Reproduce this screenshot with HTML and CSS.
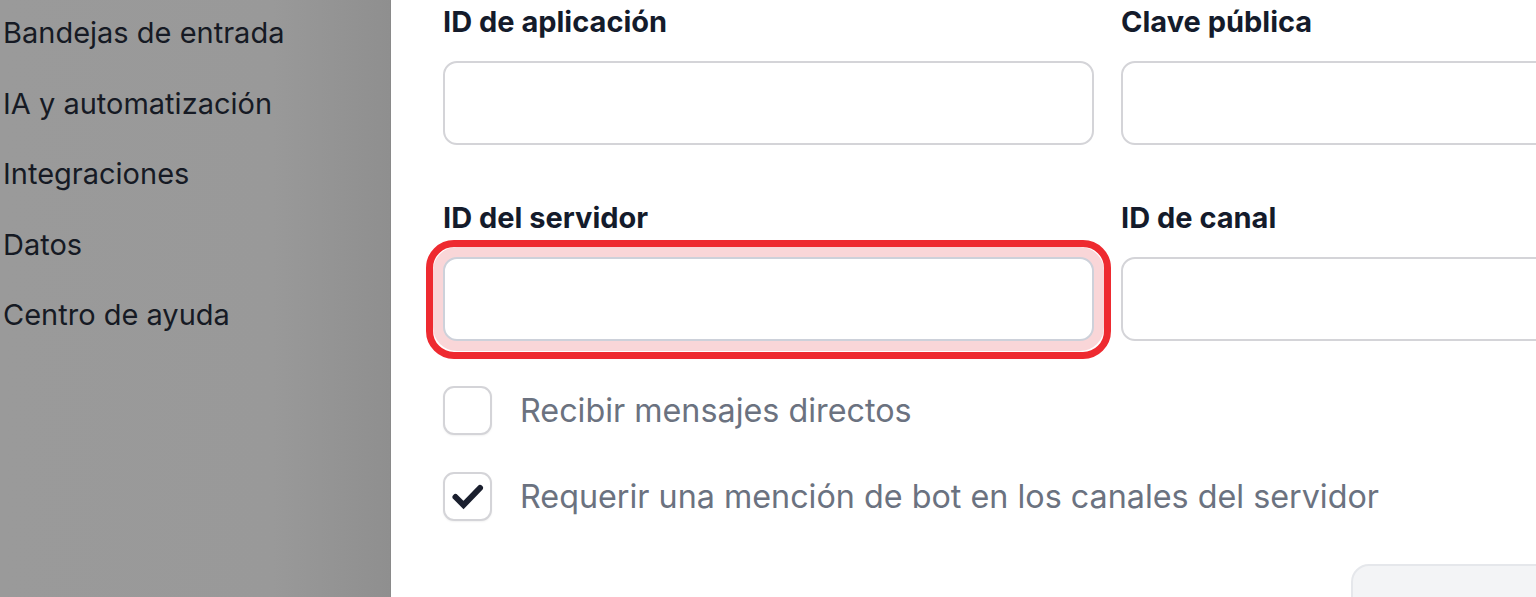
FILE: index.html
```html
<!DOCTYPE html>
<html lang="es">
<head>
<meta charset="utf-8">
<title>Discord</title>
<link rel="stylesheet" href="styles.css">
</head>
<body>
<div class="app">
  <aside class="sidebar">
    <ul class="nav">
      <li>Bandejas de entrada</li>
      <li>IA y automatización</li>
      <li>Integraciones</li>
      <li>Datos</li>
      <li>Centro de ayuda</li>
    </ul>
  </aside>
  <main class="main">
    <div class="grid">
      <div class="field">
        <label class="label">ID de aplicación</label>
        <div class="input"></div>
      </div>
      <div class="field">
        <label class="label">Clave pública</label>
        <div class="input"></div>
      </div>
      <div class="field">
        <label class="label">ID del servidor</label>
        <div class="input-wrap">
          <div class="input input-focus"></div>
          <div class="highlight"></div>
        </div>
      </div>
      <div class="field">
        <label class="label">ID de canal</label>
        <div class="input"></div>
      </div>
    </div>
    <div class="checks">
      <div class="check-row">
        <span class="box"></span>
        <span class="check-text">Recibir mensajes directos</span>
      </div>
      <div class="check-row">
        <span class="box">
          <svg width="36" height="36" viewBox="0 0 36 36"><path d="M5.5 19 L13.5 27 L30 10" fill="none" stroke="#1a1f2e" stroke-width="6" stroke-linecap="round" stroke-linejoin="miter"/></svg>
        </span>
        <span class="check-text">Requerir una mención de bot en los canales del servidor</span>
      </div>
    </div>
    <div class="actions">
      <div class="btn"></div>
    </div>
  </main>
</div>
</body>
</html>
```
FILE: styles.css
```css
html, body {
  margin: 0;
  padding: 0;
  height: 100%;
  overflow: hidden;
  background: #ffffff;
  font-family: Inter, "Noto Sans", "Liberation Sans", sans-serif;
}

.app {
  display: flex;
  height: 597px;
  width: 1536px;
  overflow: hidden;
}

.sidebar {
  width: 391px;
  flex: 0 0 391px;
  background: linear-gradient(to right, #9a9a9a 0%, #999999 70%, #8f8f8f 100%);
  border-right: 1px solid #8a8a8a;
  box-sizing: border-box;
}

.nav {
  list-style: none;
  margin: -2px 0 0 0;
  padding: 0 0 0 3px;
}

.nav li {
  height: 70.5px;
  line-height: 70.5px;
  font-size: 29px;
  color: #161a24;
}

.main {
  flex: 1;
  padding: 0 0 0 52px;
  min-width: 0;
}

.grid {
  display: grid;
  grid-template-columns: 651px 651px;
  column-gap: 27px;
  row-gap: 55px;
  padding-top: 4px;
}

.field {
  display: flex;
  flex-direction: column;
}

.label {
  font-size: 29px;
  font-weight: 700;
  color: #141b2b;
  line-height: 36px;
  height: 36px;
  margin-bottom: 21px;
}

.input {
  height: 84px;
  box-sizing: border-box;
  border: 2px solid #d4d4d8;
  border-radius: 14px;
  background: #ffffff;
}

.input-wrap {
  position: relative;
}

.input-focus {
  border-color: #cdd1da;
  box-shadow: 0 0 0 10px #f9d6d8;
}

.highlight {
  position: absolute;
  left: -17px;
  right: -17px;
  top: -17px;
  bottom: -18px;
  border: 7px solid #ee2a30;
  border-radius: 28px;
  pointer-events: none;
}

.checks {
  margin-top: 44px;
  display: flex;
  flex-direction: column;
  gap: 36px;
}

.check-row {
  display: flex;
  align-items: center;
  gap: 28px;
  height: 50px;
}

.box {
  width: 49px;
  height: 49px;
  box-sizing: border-box;
  border: 2px solid #d4d4d8;
  border-radius: 11px;
  background: #ffffff;
  box-shadow: 0 1px 2px rgba(0,0,0,0.06);
  display: flex;
  align-items: center;
  justify-content: center;
  flex: 0 0 auto;
}

.check-text {
  font-size: 32.3px;
  color: #6b7280;
}

.actions {
  display: flex;
  margin-top: 43px;
  padding-left: 908px;
}

.btn {
  width: 240px;
  height: 80px;
  flex: 0 0 auto;
  box-sizing: border-box;
  background: #f3f4f6;
  border: 2px solid #e5e7eb;
  border-radius: 18px;
}
```
